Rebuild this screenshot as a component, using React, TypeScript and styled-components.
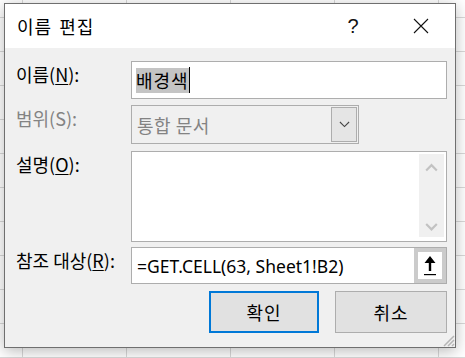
import React, { FC } from 'react'
import styled, { createGlobalStyle } from 'styled-components'

const color = {
  grid: '#d9d9d9',
  face: '#f0f0f0',
  frame: '#6f6f6f',
  field: '#adadad',
  disabled: '#838383',
  button: '#e1e1e1',
  focus: '#0078d7',
}

const GlobalStyle = createGlobalStyle`
  html, body {
    margin: 0;
    height: 100%;
  }
  body {
    background-color: #fff;
    background-image:
      linear-gradient(to right, ${color.grid} 1px, transparent 1px),
      linear-gradient(to bottom, ${color.grid} 1px, transparent 1px);
    background-size: 104px 100%, 100% 34px;
    background-position: 22px 0, 0 17px;
    font-family: 'Noto Sans CJK KR', 'Noto Sans', sans-serif;
    overflow: hidden;
  }
`

const Dialog = styled.div`
  position: relative;
  box-sizing: border-box;
  width: 452px;
  margin: 3px 0 0 4px;
  border: 1px solid ${color.frame};
  background: ${color.face};
  box-shadow: 0 3px 14px rgba(0, 0, 0, 0.28);
`

const TitleBar = styled.div`
  display: flex;
  align-items: center;
  height: 44px;
  background: #fff;
  padding-left: 12px;
`

const Title = styled.div`
  flex: 1;
  font-size: 18px;
  letter-spacing: 1px;
  word-spacing: 2px;
  color: #000;
`

const TitleButton = styled.div`
  display: flex;
  align-items: center;
  justify-content: center;
  width: 68px;
  height: 100%;
  font-family: 'Liberation Sans', sans-serif;
  font-size: 20px;
  color: #111;
`

const Body = styled.div`
  display: flex;
  flex-direction: column;
  padding: 13px 8px 14px 11px;
`

const Row = styled.div<{ $gap: number }>`
  display: flex;
  align-items: flex-start;
  margin-top: ${({ $gap }) => $gap}px;
`

const Label = styled.div<{ $disabled?: boolean }>`
  width: 115px;
  flex: none;
  padding-top: 1px;
  font-size: 18px;
  line-height: 24px;
  color: ${({ $disabled }) => ($disabled ? color.disabled : '#000')};
`

const Key = styled.span`
  text-decoration: underline;
  text-underline-offset: 2px;
`

const TextBox = styled.div<{ $height: number }>`
  box-sizing: border-box;
  flex: 1;
  display: flex;
  align-items: center;
  height: ${({ $height }) => $height}px;
  border: 1px solid ${color.field};
  background: #fff;
  padding-left: 4px;
  font-size: 18px;
  color: #000;
`

const Selected = styled.span`
  background: #c4c4c4;
  line-height: 25px;
  letter-spacing: 1px;
`

const Caret = styled.span`
  display: inline-block;
  width: 1px;
  height: 26px;
  background: #000;
`

const Combo = styled.div`
  box-sizing: border-box;
  width: 228px;
  height: 39px;
  display: flex;
  align-items: center;
  border: 1px solid ${color.field};
  background: ${color.face};
  padding: 1px;
  font-size: 18px;
  letter-spacing: 0.5px;
  color: ${color.disabled};
`

const ComboText = styled.span`
  flex: 1;
  padding-left: 4px;
`

const DropButton = styled.div`
  box-sizing: border-box;
  width: 26px;
  height: 100%;
  display: flex;
  align-items: center;
  justify-content: center;
  border: 1px solid ${color.field};
  background: #e5e5e5;
`

const Memo = styled.div`
  box-sizing: border-box;
  flex: 1;
  height: 91px;
  display: flex;
  justify-content: flex-end;
  border: 1px solid ${color.field};
  background: #fff;
  padding: 2px 2px 4px 0;
`

const ScrollBar = styled.div`
  width: 25px;
  display: flex;
  flex-direction: column;
  justify-content: space-between;
  align-items: center;
  padding: 9px 0 6px;
  background: ${color.face};
`

const RefBox = styled(TextBox)`
  padding-left: 5px;
  padding-right: 0;
  align-items: stretch;
`

const RefText = styled.span`
  flex: 1;
  display: flex;
  align-items: center;
  font-family: 'Noto Sans', sans-serif;
  font-size: 17.5px;
`

const Collapse = styled.div`
  box-sizing: border-box;
  width: 32px;
  border: 4px solid #cbcbcb;
  background: #fff;
  display: flex;
  align-items: center;
  justify-content: center;
`

const Buttons = styled.div`
  display: flex;
  justify-content: flex-end;
  gap: 16px;
  margin-top: 7px;
`

const Button = styled.div<{ $default?: boolean; $width: number }>`
  box-sizing: border-box;
  width: ${({ $width }) => $width}px;
  height: 42px;
  display: flex;
  align-items: center;
  justify-content: center;
  background: ${color.button};
  border: ${({ $default }) => ($default ? `2px solid ${color.focus}` : `1px solid ${color.field}`)};
  font-size: 18px;
  letter-spacing: 1px;
  color: #000;
`

const Grip = styled.svg`
  position: absolute;
  right: 0;
  bottom: 0;
`

const Chevron: FC<{ up?: boolean; stroke: string; size: number }> = ({ up, stroke, size }) => (
  <svg width={size} height={size / 2 + 2} viewBox="0 0 12 8">
    <path
      d={up ? 'M1 7 L6 2 L11 7' : 'M1 1 L6 6 L11 1'}
      fill="none"
      stroke={stroke}
      strokeWidth={up || size > 11 ? 2 : 1.2}
    />
  </svg>
)

export default function App() {
  return (
    <>
      <GlobalStyle />
      <Dialog>
        <TitleBar>
          <Title>이름 편집</Title>
          <TitleButton>?</TitleButton>
          <TitleButton>
            <svg width="16" height="16" viewBox="0 0 16 16">
              <path d="M1 1 L15 15 M15 1 L1 15" stroke="#111" strokeWidth="1.1" />
            </svg>
          </TitleButton>
        </TitleBar>
        <Body>
          <Row $gap={0}>
            <Label>
              이름(<Key>N</Key>):
            </Label>
            <TextBox $height={38}>
              <Selected>배경색</Selected>
              <Caret />
            </TextBox>
          </Row>
          <Row $gap={6}>
            <Label $disabled>범위(S):</Label>
            <Combo>
              <ComboText>통합 문서</ComboText>
              <DropButton>
                <Chevron stroke="#444" size={11} />
              </DropButton>
            </Combo>
          </Row>
          <Row $gap={7}>
            <Label>
              설명(<Key>O</Key>):
            </Label>
            <Memo>
              <ScrollBar>
                <Chevron up stroke="#c2c2c2" size={13} />
                <Chevron stroke="#c2c2c2" size={13} />
              </ScrollBar>
            </Memo>
          </Row>
          <Row $gap={5}>
            <Label>
              참조 대상(<Key>R</Key>):
            </Label>
            <RefBox $height={37}>
              <RefText>=GET.CELL(63, Sheet1!B2)</RefText>
              <Collapse>
                <svg width="12" height="20" viewBox="0 0 12 20">
                  <path d="M6 0 L11.5 7 L7.2 7 L7.2 15 L4.8 15 L4.8 7 L0.5 7 Z" fill="#000" />
                  <rect x="0" y="18" width="12" height="1.2" fill="#000" />
                </svg>
              </Collapse>
            </RefBox>
          </Row>
          <Buttons>
            <Button $default $width={110}>
              확인
            </Button>
            <Button $width={112}>취소</Button>
          </Buttons>
        </Body>
        <Grip width="13" height="13" viewBox="0 0 13 13">
          <path d="M12 2 L2 12 M12 6 L6 12 M12 10 L10 12" stroke="#b5b5b5" strokeWidth="1.5" />
        </Grip>
      </Dialog>
    </>
  )
}
